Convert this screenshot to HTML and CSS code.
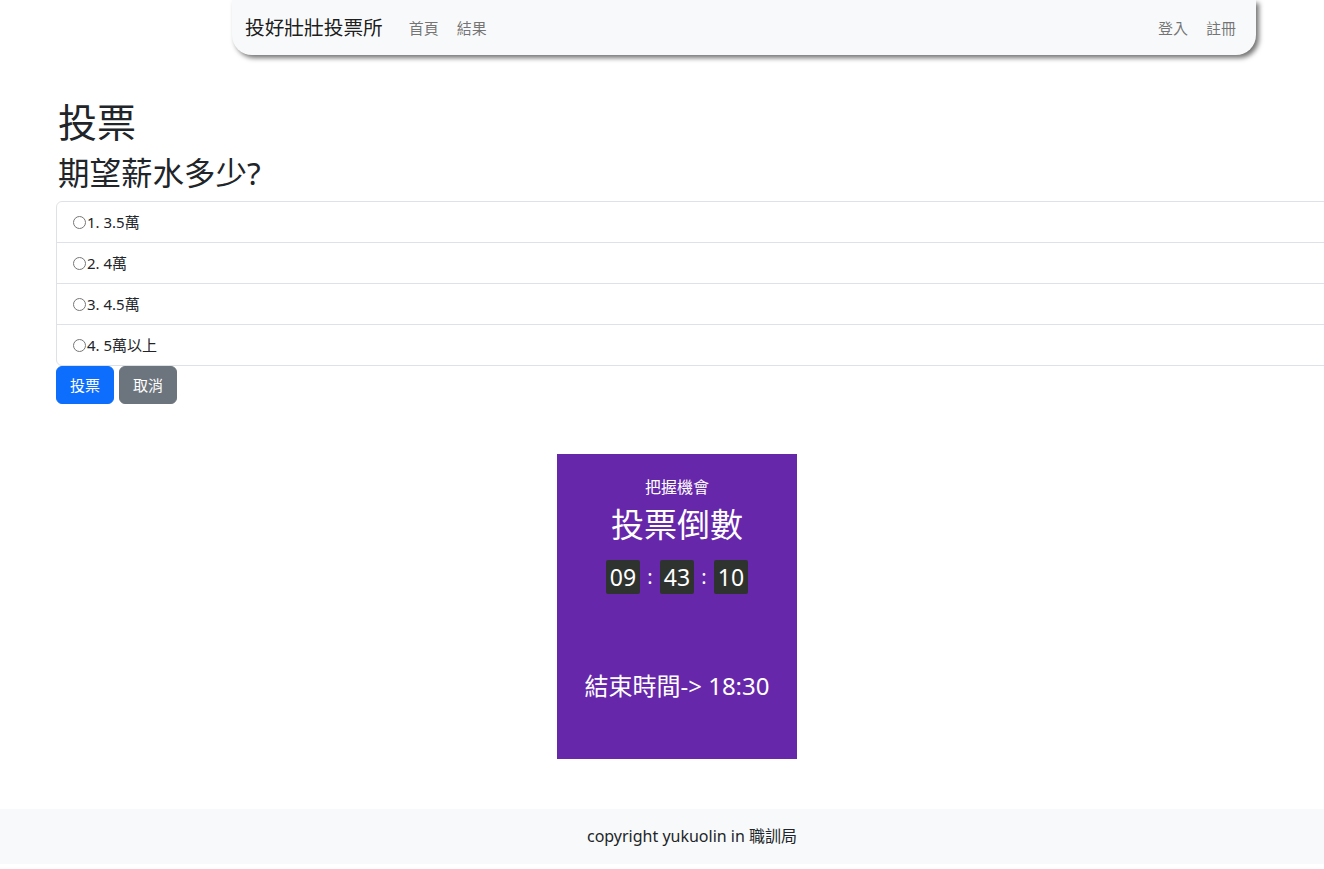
FILE: index.html
```html
<!DOCTYPE html>
<html lang="zh-Hant">
<head>
<meta charset="utf-8">
<title>投好壯壯投票所</title>
<link rel="stylesheet" href="styles.css">
</head>
<body>
<nav class="navbar">
  <a class="brand" href="#">投好壯壯投票所</a>
  <ul class="nav-links">
    <li><a href="#">首頁</a></li>
    <li><a href="#">結果</a></li>
  </ul>
  <ul class="nav-links nav-right">
    <li><a href="#">登入</a></li>
    <li><a href="#">註冊</a></li>
  </ul>
</nav>

<main class="main">
  <h1 class="title">投票</h1>
  <h2 class="question">期望薪水多少?</h2>
  <form class="vote-form">
    <ul class="options">
      <li class="option"><label><input type="radio" name="opt" class="radio">1. 3.5萬</label></li>
      <li class="option"><label><input type="radio" name="opt" class="radio">2. 4萬</label></li>
      <li class="option"><label><input type="radio" name="opt" class="radio">3. 4.5萬</label></li>
      <li class="option"><label><input type="radio" name="opt" class="radio">4. 5萬以上</label></li>
    </ul>
    <div class="buttons">
      <button type="button" class="btn btn-primary">投票</button>
      <button type="button" class="btn btn-secondary">取消</button>
    </div>
  </form>

  <section class="countdown">
    <div class="cd-sub">把握機會</div>
    <div class="cd-title">投票倒數</div>
    <div class="cd-timer">
      <span class="cd-box">09</span><span class="cd-colon">:</span><span class="cd-box">43</span><span class="cd-colon">:</span><span class="cd-box">10</span>
    </div>
    <div class="cd-end">結束時間-&gt; 18:30</div>
  </section>
</main>

<footer class="footer">copyright yukuolin in 職訓局</footer>
</body>
</html>
```

FILE: styles.css
```css
html, body {
  overflow-x: hidden;
}
body {
  margin: 0;
  font-family: "Noto Sans", "Noto Sans CJK TC", sans-serif;
  font-size: 16px;
  line-height: 1.5;
  color: #212529;
  background: #fff;
}
a { text-decoration: none; }

.navbar {
  display: flex;
  align-items: center;
  width: 1024px;
  height: 55px;
  box-sizing: border-box;
  margin-left: 232px;
  padding: 0 20px 0 13px;
  background: #f8f9fa;
  border-radius: 0 0 20px 20px;
  box-shadow: 3px 3px 5px rgba(0, 0, 0, 0.55);
}
.brand {
  font-size: 19.7px;
  color: rgba(0, 0, 0, 0.9);
  margin-right: 26px;
}
.nav-links {
  display: flex;
  list-style: none;
  margin: 0;
  padding: 0;
  gap: 18px;
}
.nav-links a {
  font-size: 15px;
  color: rgba(0, 0, 0, 0.55);
}
.nav-right { margin-left: auto; }

.main {
  padding: 43px 0 0 56px;
}
.title {
  margin: 0 0 8px 2px;
  font-size: 39px;
  font-weight: 400;
  line-height: 48px;
}
.question {
  margin: 0 0 9px 2px;
  font-size: 31.5px;
  font-weight: 400;
  line-height: 38px;
}
.options {
  list-style: none;
  margin: 0;
  padding: 0;
  width: 1320px;
  border: 1px solid #dee2e6;
  border-radius: 6px;
}
.option {
  padding: 8px 16px;
  font-size: 15px;
  line-height: 24px;
}
.option + .option { border-top: 1px solid #dee2e6; }
.option label {
  display: flex;
  align-items: center;
}
.radio {
  margin: 0 1px 0 0;
  width: 13px;
  height: 13px;
}
.buttons {
  display: flex;
  gap: 5px;
}
.btn {
  font-family: inherit;
  font-size: 15px;
  line-height: 24px;
  padding: 6px 13px;
  border: 1px solid transparent;
  border-radius: 6px;
  color: #fff;
  cursor: pointer;
}
.btn-primary { background: #0d6efd; border-color: #0d6efd; }
.btn-secondary { background: #6c757d; border-color: #6c757d; }

.countdown {
  width: 240px;
  height: 305px;
  box-sizing: border-box;
  margin: 50px 0 0 501px;
  padding-top: 21px;
  background: #6727ab;
  color: #fff;
  text-align: center;
}
.cd-sub {
  font-size: 16px;
  line-height: 24px;
}
.cd-title {
  margin-top: 7px;
  font-size: 33px;
  line-height: 38px;
}
.cd-timer {
  margin-top: 16px;
  display: flex;
  justify-content: center;
  gap: 6px;
}
.cd-box {
  width: 34px;
  height: 34px;
  line-height: 34px;
  font-size: 23px;
  background: #2f332f;
  border-radius: 2px;
}
.cd-colon {
  width: 8px;
  line-height: 34px;
  font-size: 20px;
}
.cd-end {
  margin-top: 77px;
  font-size: 24px;
  line-height: 30px;
}

.footer {
  margin-top: 50px;
  height: 55px;
  box-sizing: border-box;
  padding: 15px 0 0 60px;
  background: #f8f9fa;
  text-align: center;
  font-size: 16px;
  line-height: 24px;
}
```
